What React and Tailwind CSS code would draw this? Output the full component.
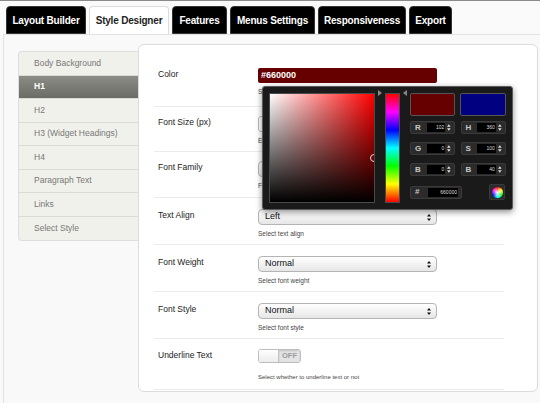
import React from "react";

const TABS = [
  ["Layout Builder", "w-[80px]"],
  ["Style Designer", "w-[80px]"],
  ["Features", "w-[55px]"],
  ["Menus Settings", "w-[85px]"],
  ["Responsiveness", "w-[88px]"],
  ["Export", "w-[43px]"],
];

const SIDE = ["Body Background", "H1", "H2", "H3 (Widget Headings)", "H4", "Paragraph Text", "Links", "Select Style"];

function UpDown({ className = "" }) {
  return (
    <svg width="4" height="7" viewBox="0 0 4 7" className={className}>
      <path d="M2 0 L4 2.6 L0 2.6 Z M2 7 L4 4.4 L0 4.4 Z" fill="currentColor" />
    </svg>
  );
}

function Select({ value }) {
  return (
    <div className="flex h-[16px] w-[179px] items-center justify-between rounded-[4px] border border-[#b4b4b4] bg-[linear-gradient(#ffffff,#e6e6e6)] pl-[6px] pr-[5px] text-[9px] text-[#111] shadow-[0_1px_0_#fff]">
      <span>{value}</span>
      <UpDown className="text-[#111]" />
    </div>
  );
}

function Help({ children }) {
  return <p className="mt-[5px] text-[6.5px] leading-[8px] text-[#444]">{children}</p>;
}

function Row({ label, h, pt = "pt-[11px]", children }) {
  return (
    <div className={`flex border-b border-[#ebebeb] ${h} ${pt}`}>
      <div className="w-[104px] pl-[4px] pt-[1px] text-[8.5px] leading-[10px] text-[#222]">{label}</div>
      <div>{children}</div>
    </div>
  );
}

function Field({ letter, value, wide }) {
  return (
    <div className={`flex h-[13px] items-center rounded-[2px] border border-[#3a3a3a] bg-[#2b2b2b] pl-[4px] pr-[3px] ${wide ? "w-[52px]" : "w-[45px]"}`}>
      <span className="w-[13px] text-[8px] font-bold leading-none text-[#c8c8c8]">{letter}</span>
      <span className={`flex h-[9px] items-center justify-end bg-black pr-[1px] text-[5px] leading-none text-[#ddd] ${wide ? "w-[31px]" : "w-[20px]"}`}>
        {value}
      </span>
      {!wide && <UpDown className="ml-[2px] text-[#ddd]" />}
    </div>
  );
}

function ColorPicker() {
  return (
    <div className="absolute left-[123px] top-[41px] flex h-[124px] w-[251px] gap-[10px] rounded-[3px] border border-[#5a5a5a] bg-[#1a1a1a] p-[6px] shadow-[0_2px_6px_rgba(0,0,0,0.45)]">
      <div className="relative h-[110px] w-[110px] overflow-hidden border border-[#4a4a4a] bg-[linear-gradient(to_top,#000,transparent),linear-gradient(to_right,#fff,#f00)]">
        <div className="absolute right-[-4px] top-[60px] h-[8px] w-[8px] rounded-full border border-[#ddd]" />
      </div>
      <div className="relative">
        <div className="absolute left-[-7px] top-[-3px] h-0 w-0 border-y-[3.5px] border-l-[4px] border-y-transparent border-l-[#888]" />
        <div className="absolute right-[-7px] top-[-3px] h-0 w-0 border-y-[3.5px] border-r-[4px] border-y-transparent border-r-[#888]" />
        <div className="h-[110px] w-[15px] border border-[#4a4a4a] bg-[linear-gradient(to_bottom,#f00,#f0f,#00f,#0ff,#0f0,#ff0,#f00)]" />
      </div>
      <div className="flex w-[96px] flex-col">
        <div className="flex gap-[5px]">
          <div className="h-[23px] w-[45px] rounded-[2px] border border-[#555] bg-[#660000]" />
          <div className="h-[23px] w-[46px] rounded-[2px] border border-[#555] bg-[#000080]" />
        </div>
        <div className="mt-[5px] grid grid-cols-2 gap-x-[5px] gap-y-[8px]">
          <Field letter="R" value="102" />
          <Field letter="H" value="360" />
          <Field letter="G" value="0" />
          <Field letter="S" value="100" />
          <Field letter="B" value="0" />
          <Field letter="B" value="40" />
        </div>
        <div className="mt-[8px] flex items-center justify-between">
          <Field letter="#" value="660000" wide />
          <div className="mr-[1px] flex h-[16px] w-[16px] items-center justify-center rounded-[2px] border border-[#3a3a3a] bg-[#2b2b2b]">
            <div className="h-[11px] w-[11px] rounded-full bg-[radial-gradient(circle,#fff,transparent_70%),conic-gradient(red,yellow,lime,cyan,blue,magenta,red)]" />
          </div>
        </div>
      </div>
    </div>
  );
}

export default function App() {
  return (
    <div className="h-[403px] w-[540px] overflow-hidden border-t border-[#8a8a8a] bg-[#fafafa] font-['Liberation_Sans',Arial,sans-serif]">
      {/* tabs */}
      <div className="flex gap-[3px] pl-[6px] pt-[5px]">
        {TABS.map(([t, w]) => {
          const active = t === "Style Designer";
          return (
            <div
              key={t}
              className={`flex h-[28px] items-center justify-center rounded-t-[4px] text-[10px] font-bold tracking-[-0.2px] ${w} ${
                active
                  ? "relative z-10 border border-b-0 border-[#dcdcdc] bg-white text-[#222]"
                  : "border border-[#333] bg-black text-white"
              }`}
            >
              {t}
            </div>
          );
        })}
      </div>

      {/* body */}
      <div className="ml-[3px] flex h-[400px] items-start border-l border-t border-[#e2e2e2] bg-[#f9f9f9] pl-[14px]">
        <div className="mt-[16px] w-[121px] overflow-hidden rounded-l-[4px] border border-r-0 border-[#dedede] bg-[#f1f1ec]">
          {SIDE.map((s) => (
            <div
              key={s}
              className={`flex h-[23.5px] items-center border-b border-[#dcdcd6] pl-[15px] text-[8.5px] last:border-b-0 ${
                s === "H1"
                  ? "bg-[linear-gradient(#8c8c86,#6c6c66)] font-bold text-white"
                  : "text-[#777]"
              }`}
            >
              {s}
            </div>
          ))}
        </div>

        <div className="relative ml-[-1px] mt-[9px] h-[348px] w-[400px] rounded-[6px] border border-[#dcdcdc] bg-white pl-[15px] pr-[33px]">
          <Row label="Color" h="h-[62px]" pt="pt-[23px]">
            <div className="flex h-[15px] w-[179px] items-center rounded-[2px] bg-[#660000] pl-[3px] text-[9px] font-bold text-white">#660000</div>
            <Help>Select color</Help>
          </Row>
          <Row label="Font Size (px)" h="h-[45px]" pt="pt-[9px]">
            <div className="h-[16px] w-[179px] rounded-[3px] border border-[#bbb] bg-white" />
            <Help>Enter font size</Help>
          </Row>
          <Row label="Font Family" h="h-[46px]" pt="pt-[9px]">
            <Select value="Arial" />
            <Help>Font family</Help>
          </Row>
          <Row label="Text Align" h="h-[47px]">
            <Select value="Left" />
            <Help>Select text align</Help>
          </Row>
          <Row label="Font Weight" h="h-[47px]">
            <Select value="Normal" />
            <Help>Select font weight</Help>
          </Row>
          <Row label="Font Style" h="h-[47px]">
            <Select value="Normal" />
            <Help>Select font style</Help>
          </Row>
          <Row label="Underline Text" h="h-[51px]" pt="pt-[10px]">
            <div className="flex h-[14px] w-[43px] overflow-hidden rounded-[3px] border border-[#bdbdbd]">
              <div className="w-[20px] border-r border-[#c4c4c4] bg-[linear-gradient(#ffffff,#ececec)]" />
              <div className="flex flex-1 items-center justify-center bg-[#e4e4e4] text-[7.5px] font-bold text-[#9a9a9a] shadow-[inset_0_1px_2px_rgba(0,0,0,0.15)]">
                OFF
              </div>
            </div>
            <p className="mt-[10px] text-[6px] leading-[8px] text-[#444]">Select whether to underline text or not</p>
          </Row>
          <ColorPicker />
        </div>
      </div>
    </div>
  );
}
